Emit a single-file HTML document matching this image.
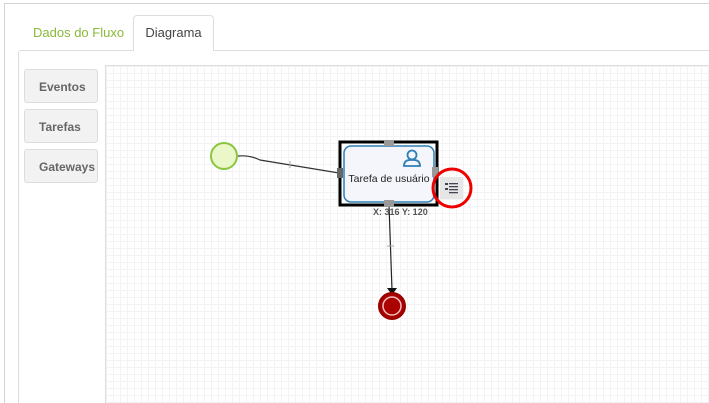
<!DOCTYPE html><html><head><style>
html,body{margin:0;width:709px;height:403px;overflow:hidden}
body{background:#fff;font-family:"Liberation Sans",sans-serif;position:relative}
.a{position:absolute}
.btn{position:absolute;left:24px;width:74px;height:34px;background:#f2f2f2;border:1px solid #ddd;border-radius:3px;font-weight:bold;font-size:12px;color:#666;line-height:34px;padding-left:14px;box-sizing:border-box}
</style></head><body>
<div class="a" style="left:4px;top:3px;width:705px;height:400px;border-left:1px solid #d4d4d4;border-top:1px solid #d4d4d4;box-sizing:border-box"></div>
<div class="a" style="left:18px;top:50px;width:691px;height:353px;border-left:1px solid #ddd;border-top:1px solid #ddd;border-radius:3px 0 0 0;box-sizing:border-box"></div>
<div class="a" style="left:133px;top:15px;width:81px;height:36px;background:#fff;border:1px solid #ddd;border-bottom:none;border-radius:4px 4px 0 0;box-sizing:border-box;font-size:13px;color:#444;text-align:center;line-height:34px">Diagrama</div>
<div class="a" style="left:33px;top:25px;font-size:13px;color:#8ab93a">Dados do Fluxo</div>
<div class="a" style="left:105px;top:65px;width:604px;height:338px;box-sizing:border-box;border-left:1px solid #ddd;border-top:1px solid #ddd;background-color:#fff;background-image:linear-gradient(#f3f3f3 1px,transparent 1px),linear-gradient(90deg,#f3f3f3 1px,transparent 1px);background-size:7px 7px"></div>
<div class="btn" style="top:69px">Eventos</div>
<div class="btn" style="top:109px">Tarefas</div>
<div class="btn" style="top:149px">Gateways</div>
<svg class="a" style="left:0;top:0" width="709" height="403">
<path d="M238 156 Q250 155 260 160 L339 173" fill="none" stroke="#333" stroke-width="1.2"/>
<line x1="290" y1="161" x2="290" y2="168" stroke="#aaa"/>
<line x1="389" y1="205" x2="392" y2="290" stroke="#222" stroke-width="1.2"/>
<line x1="387" y1="246" x2="394" y2="246" stroke="#aaa"/>
<path d="M387 288 L397 288 L392 295Z" fill="#111"/>
<circle cx="224" cy="156" r="13" fill="#eaf7c8" stroke="#8cc63f" stroke-width="2"/>
<circle cx="392" cy="306" r="13" fill="#a00" stroke="#900" stroke-width="2"/>
<circle cx="392" cy="306" r="9" fill="none" stroke="#f0c0c0" stroke-width="1.5"/>
<circle cx="392" cy="306" r="7" fill="#a00"/>
<rect x="340" y="142" width="97" height="63" fill="#fff" stroke="#000" stroke-width="3"/>
<rect x="344" y="146" width="90" height="56" rx="7" fill="#f4f6fc" stroke="#2d7fb5" stroke-width="1.5"/>
<rect x="384" y="140" width="10" height="6" fill="#999"/>
<rect x="384" y="200" width="10" height="7" fill="#999"/>
<rect x="337" y="168" width="6" height="10" fill="#666"/>
<rect x="432" y="167" width="6" height="10" fill="#999"/>
<circle cx="412" cy="155" r="4.5" fill="none" stroke="#2d7fb5" stroke-width="1.8"/>
<path d="M404 166 Q404 160 410 160 L414 160 Q420 160 420 166 Z" fill="none" stroke="#2d7fb5" stroke-width="1.8"/>
<text x="389" y="182" font-size="10.5" text-anchor="middle" fill="#222" font-family="Liberation Sans">Tarefa de usuário</text>
<text x="373" y="215" font-size="9" font-weight="bold" fill="#555" font-family="Liberation Sans">X: 316  Y: 120</text>
<rect x="440" y="177" width="23" height="22" fill="#e6e6e6"/>
<g fill="#445"><rect x="445" y="183" width="3" height="2"/><rect x="445" y="188" width="3" height="2"/><rect x="449" y="183" width="9" height="1.3"/><rect x="449" y="186" width="9" height="1.3"/><rect x="449" y="189" width="9" height="1.3"/><rect x="449" y="192" width="9" height="1.3"/></g>
<circle cx="452" cy="188" r="19" fill="none" stroke="#e00" stroke-width="3"/>
</svg>
</body></html>
